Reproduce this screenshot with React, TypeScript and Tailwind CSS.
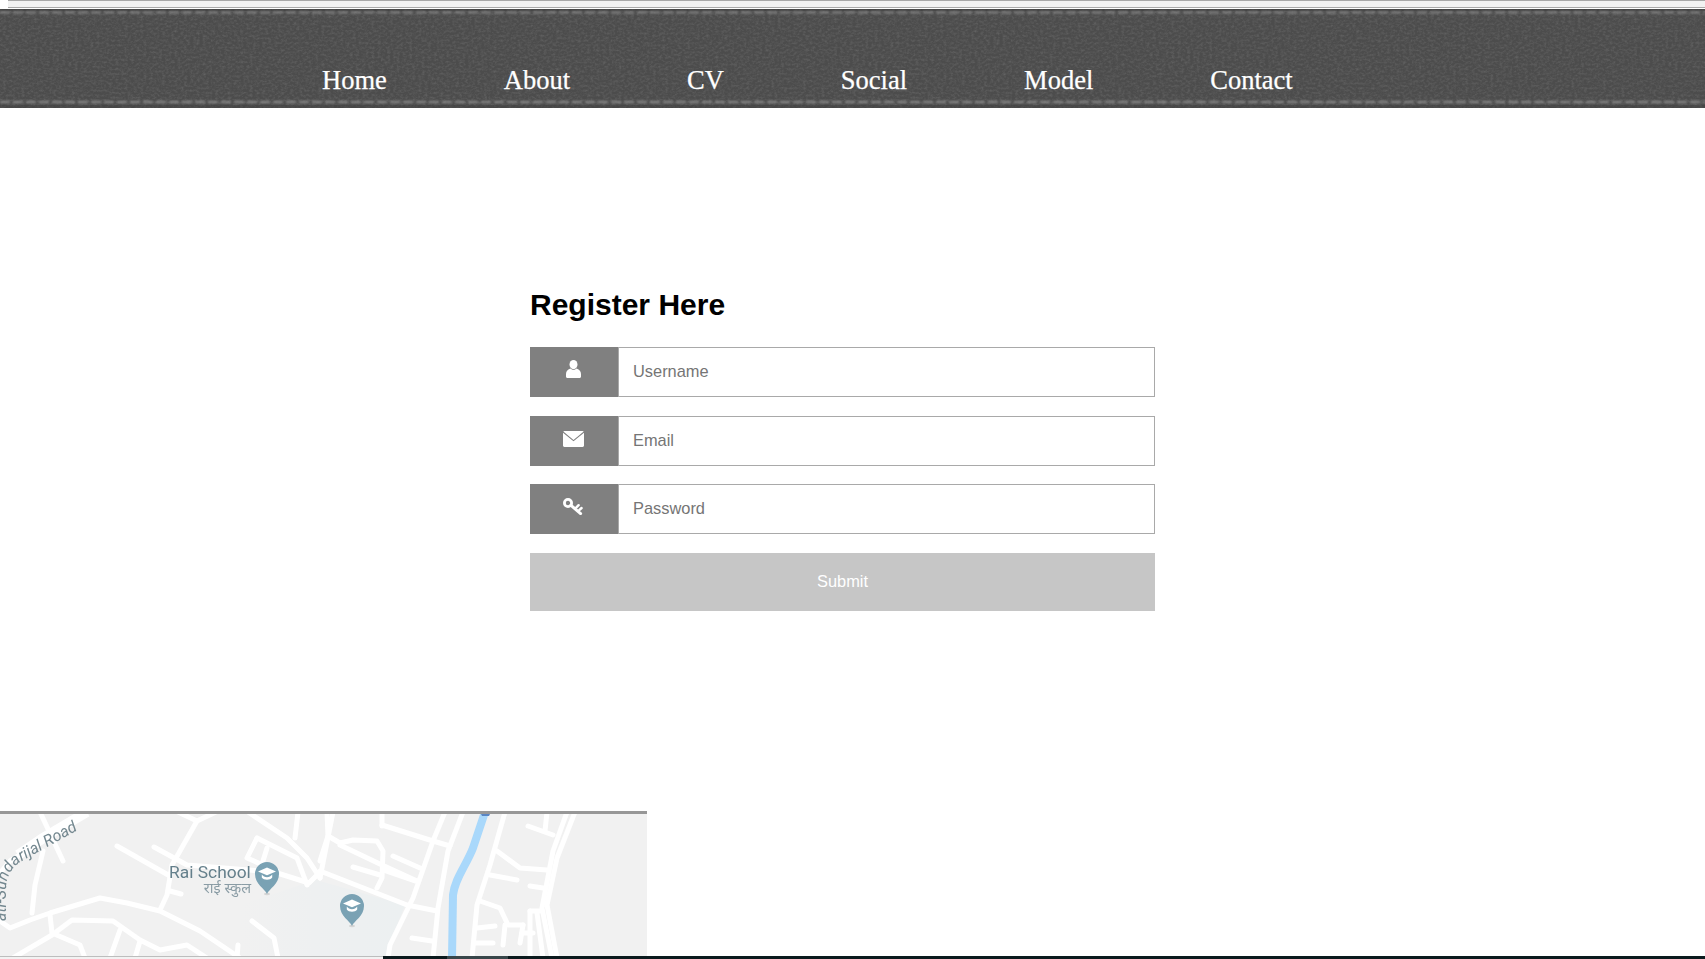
const navItems = ["Home", "About", "CV", "Social", "Model", "Contact"];

function Leather() {
  return (
    <svg className="absolute inset-0 h-full w-full" aria-hidden="true">
      <defs>
        <filter id="leather" x="0" y="0" width="100%" height="100%">
          <feTurbulence type="fractalNoise" baseFrequency="0.32 0.42" numOctaves="4" seed="11" />
          <feColorMatrix
            type="matrix"
            values="0 0 0 0 0.5  0 0 0 0 0.5  0 0 0 0 0.5  1.1 0 0 0 -0.42"
          />
          <feGaussianBlur stdDeviation="0.6" />
        </filter>
        <filter id="stitch" filterUnits="userSpaceOnUse" x="0" y="0" width="1705" height="99">
          <feGaussianBlur stdDeviation="0.8" />
        </filter>
      </defs>
      <rect width="100%" height="100%" filter="url(#leather)" opacity="0.3" />
      <rect x="0" y="0" width="100%" height="2" fill="#3f3f3f" opacity="0.6" />
      <rect x="0" y="96" width="100%" height="3" fill="#3f3f3f" opacity="0.4" />
      <g filter="url(#stitch)">
        <line x1="0" x2="1705" y1="3.5" y2="3.5" stroke="#858585" strokeWidth="2" strokeDasharray="10 3" />
        <line x1="0" x2="1705" y1="93" y2="93" stroke="#8a8a8a" strokeWidth="2" strokeDasharray="10 3" />
      </g>
    </svg>
  );
}

function UserIcon() {
  return (
    <svg width="15" height="18" viewBox="0 0 15 18" fill="white">
      <ellipse cx="7.5" cy="4.6" rx="4" ry="4.6" />
      <path d="M4.6 8.6C2 9.6 0 11 0 14v2.5c0 .9.6 1.5 1.5 1.5h12c.9 0 1.5-.6 1.5-1.5V14c0-3-2-4.4-4.6-5.4-.8.9-1.8 1.3-2.9 1.3s-2.1-.4-2.9-1.3z" />
    </svg>
  );
}

function MailIcon() {
  return (
    <svg width="21" height="16" viewBox="0 0 21 16" fill="white">
      <path d="M1.4 0h18.2c.5 0 .9.2 1.1.5L10.5 9 .3.5C.5.2.9 0 1.4 0z" />
      <path d="M0 1.7v12.9C0 15.4.6 16 1.4 16h18.2c.8 0 1.4-.6 1.4-1.4V1.7L10.5 10.2z" />
    </svg>
  );
}

function KeyIcon() {
  return (
    <svg width="20" height="17" viewBox="0 0 20 17" fill="none" stroke="white">
      <circle cx="5" cy="5" r="3.6" strokeWidth="2.8" />
      <path d="M8 7.4l9.6 8.2" strokeWidth="3" strokeLinecap="round" />
      <path d="M13.2 9.6l2.4-2.4M16.2 12.2l2.4-2.2" strokeWidth="2.4" strokeLinecap="round" />
    </svg>
  );
}

function Field({
  icon,
  placeholder,
  type,
  iconPad,
  margin,
}: {
  icon: React.ReactNode;
  placeholder: string;
  type: string;
  iconPad: string;
  margin: string;
}) {
  return (
    <div className={`flex h-[50px] ${margin}`}>
      <div className={`flex w-[88px] shrink-0 items-center justify-center bg-[#808080] ${iconPad}`}>{icon}</div>
      <input
        type={type}
        placeholder={placeholder}
        className="h-full min-w-0 flex-1 border border-[#a9a9a9] bg-white pb-[2px] pl-[14px] font-['Liberation_Sans',Arial,sans-serif] text-[16.4px] outline-none placeholder:text-[#757575]"
      />
    </div>
  );
}

function Pin({ x, y }: { x: number; y: number }) {
  return (
    <g transform={`translate(${x} ${y})`}>
      <ellipse cx="0" cy="20" rx="3" ry="1.2" fill="#d5d5d5" />
      <path d="M0 20C-2 15-12 10-12 0a12 12 0 0 1 24 0C12 10 2 15 0 20z" fill="#7aa2b4" />
      <circle cx="0" cy="0" r="9" fill="#7aa2b4" />
      <path d="M-9-2.6 0-6.4 9-2.6 0 1.2z" fill="white" />
      <path d="M-5.2 0.6c2 3.4 8.4 3.4 10.4 0v3C3.2 6.6-3.2 6.6-5.2 3.6z" fill="white" />
    </g>
  );
}

const roads = [
  "M87 812L43 841L10 861L-4 878",
  "M40 812L63 861",
  "M43 851L35 885L32 913",
  "M0 921L10 928L30 920L50 913L100 898L127 903L160 911L200 931L240 958",
  "M50 915L52 933L80 945L85 958",
  "M13 958L52 935L72 920L113 921L140 940L160 950L187 945L207 958",
  "M120 930L110 958",
  "M140 941L135 958",
  "M117 846L170 876",
  "M170 891L181 894",
  "M197 821L172 865L167 895L160 910",
  "M178 812L197 821L216 812",
  "M154 847L187 865L274 872L309 883L320 872",
  "M257 838L247 858L277 871",
  "M257 838L297 858L307 885",
  "M267 848L263 861",
  "M248 812L287 838L307 858L320 878",
  "M298 812L295 838",
  "M333 812L320 878",
  "M252 921L274 938L278 958",
  "M237 958L238 945",
  "M320 871L407 905L437 911",
  "M327 812L328 836L320 861",
  "M328 836L340 843L353 840L377 841L383 851L382 878L377 888",
  "M340 845L382 865L417 881",
  "M353 867L380 875",
  "M383 870L415 881",
  "M393 856L420 868",
  "M382 825L433 841L450 846",
  "M382 812L382 826",
  "M445 812L433 841L413 898L390 945L388 958",
  "M463 812L448 851L438 908L433 958",
  "M412 938L432 941",
  "M505 812L490 865L477 905L472 958",
  "M497 851L520 868L547 870",
  "M490 875L517 880",
  "M480 901L500 908L508 925L523 925",
  "M477 928L495 926",
  "M475 943L493 943",
  "M505 925L503 945",
  "M523 925L520 943",
  "M522 933L533 933",
  "M530 886L543 888",
  "M575 812L557 858L547 905L557 958",
  "M567 812L553 851L542 908L552 958",
  "M528 826L553 835",
  "M547 812L545 831",
  "M530 911L540 911",
  "M530 911L530 958",
  "M537 913L543 958",
];

function MapPicture() {
  return (
    <svg
      viewBox="0 814 647 142"
      width="647"
      height="142"
      className="block blur-[0.6px]"
      role="img"
      aria-label="Map"
    >
      <defs>
        <linearGradient id="park" x1="0" x2="1" y1="0" y2="0">
          <stop offset="0" stopColor="#f1f1f1" />
          <stop offset="0.45" stopColor="#eef0f1" />
          <stop offset="1" stopColor="#ecf0f1" />
        </linearGradient>
        <path id="road-label" d="M6 960L6 890Q6 872 20 862L78 830" />
      </defs>
      <rect x="0" y="814" width="647" height="142" fill="#f1f1f1" />
      <path d="M316 880L405 905L385 956L240 956L240 905z" fill="url(#park)" />
      <path d="M87 812L43 838L18 855" stroke="white" strokeWidth="10" fill="none" />
      <g stroke="white" strokeWidth="5" fill="none" strokeLinecap="round" strokeLinejoin="round">
        {roads.map((d) => (
          <path key={d} d={d} />
        ))}
      </g>
      <path
        d="M485 812L473 848C466 866 455 878 453 895L452 958"
        stroke="#a9d8fb"
        strokeWidth="8"
        fill="none"
        strokeLinejoin="round"
      />
      <path d="M481 814h9l-1 2h-7z" fill="#5a86c4" />
      <text fontFamily="Roboto, sans-serif" fontSize="16" fontStyle="italic" fill="#73878f" textAnchor="end">
        <textPath href="#road-label" startOffset="100%">
          ati-Sundarijal Road
        </textPath>
      </text>
      <text x="169" y="878" fontFamily="Roboto, sans-serif" fontSize="17.4" fill="#647f8b">
        Rai School
      </text>
      <text
        x="251"
        y="893"
        textAnchor="end"
        fontFamily="'Noto Sans', 'Noto Sans Devanagari', sans-serif"
        fontSize="14.5"
        fill="#8a9ca5"
      >
        राई स्कुल
      </text>
      <Pin x={267} y={874} />
      <Pin x={352} y={906} />
    </svg>
  );
}

export default function App() {
  return (
    <div className="flex h-[959px] w-full flex-col overflow-hidden bg-white font-['Liberation_Sans',Arial,sans-serif]">
      <div className="h-[9px] shrink-0 bg-white">
        <div className="ml-[8px] h-[8px] border-y border-[#a8a8a8] bg-[#f2f2f2]" />
      </div>

      <nav className="relative flex h-[99px] shrink-0 items-end bg-[#4c4c4c] pb-[13px] pl-[322px]">
        <Leather />
        <ul className="relative flex gap-[117px] font-['Liberation_Serif','Times_New_Roman',serif] text-[26.5px] leading-[30px] text-white [-webkit-text-stroke:0.25px_white]">
          {navItems.map((item) => (
            <li key={item}>{item}</li>
          ))}
        </ul>
      </nav>

      <main className="min-h-0 flex-1 pl-[530px] pt-[180px]">
        <form className="w-[625px]">
          <h2 className="mb-[25px] text-[30px] leading-[34px] font-bold text-black">Register Here</h2>
          <Field icon={<UserIcon />} placeholder="Username" type="text" iconPad="pb-[6px] pr-[2px]" margin="mb-[19px]" />
          <Field icon={<MailIcon />} placeholder="Email" type="email" iconPad="pb-[4px] pr-[2px]" margin="mb-[18px]" />
          <Field icon={<KeyIcon />} placeholder="Password" type="password" iconPad="pb-[6px] pr-[2px]" margin="mb-[19px]" />
          <button type="button" className="block h-[58px] w-full bg-[#c6c6c6] pb-[2px] text-[16.4px] text-white">
            Submit
          </button>
        </form>
      </main>

      <div className="w-[647px] shrink-0 border-t-[3px] border-[#979797]">
        <MapPicture />
      </div>

      <footer className="flex h-[3px] shrink-0">
        <div className="w-[383px] border-t border-[#bdbdbd] bg-[#f2f2f2]" />
        <div className="w-[64px] bg-[#0b1a1d]" />
        <div className="w-[61px] bg-[#38464a]" />
        <div className="flex-1 bg-[#0b1a1d]" />
      </footer>
    </div>
  );
}
